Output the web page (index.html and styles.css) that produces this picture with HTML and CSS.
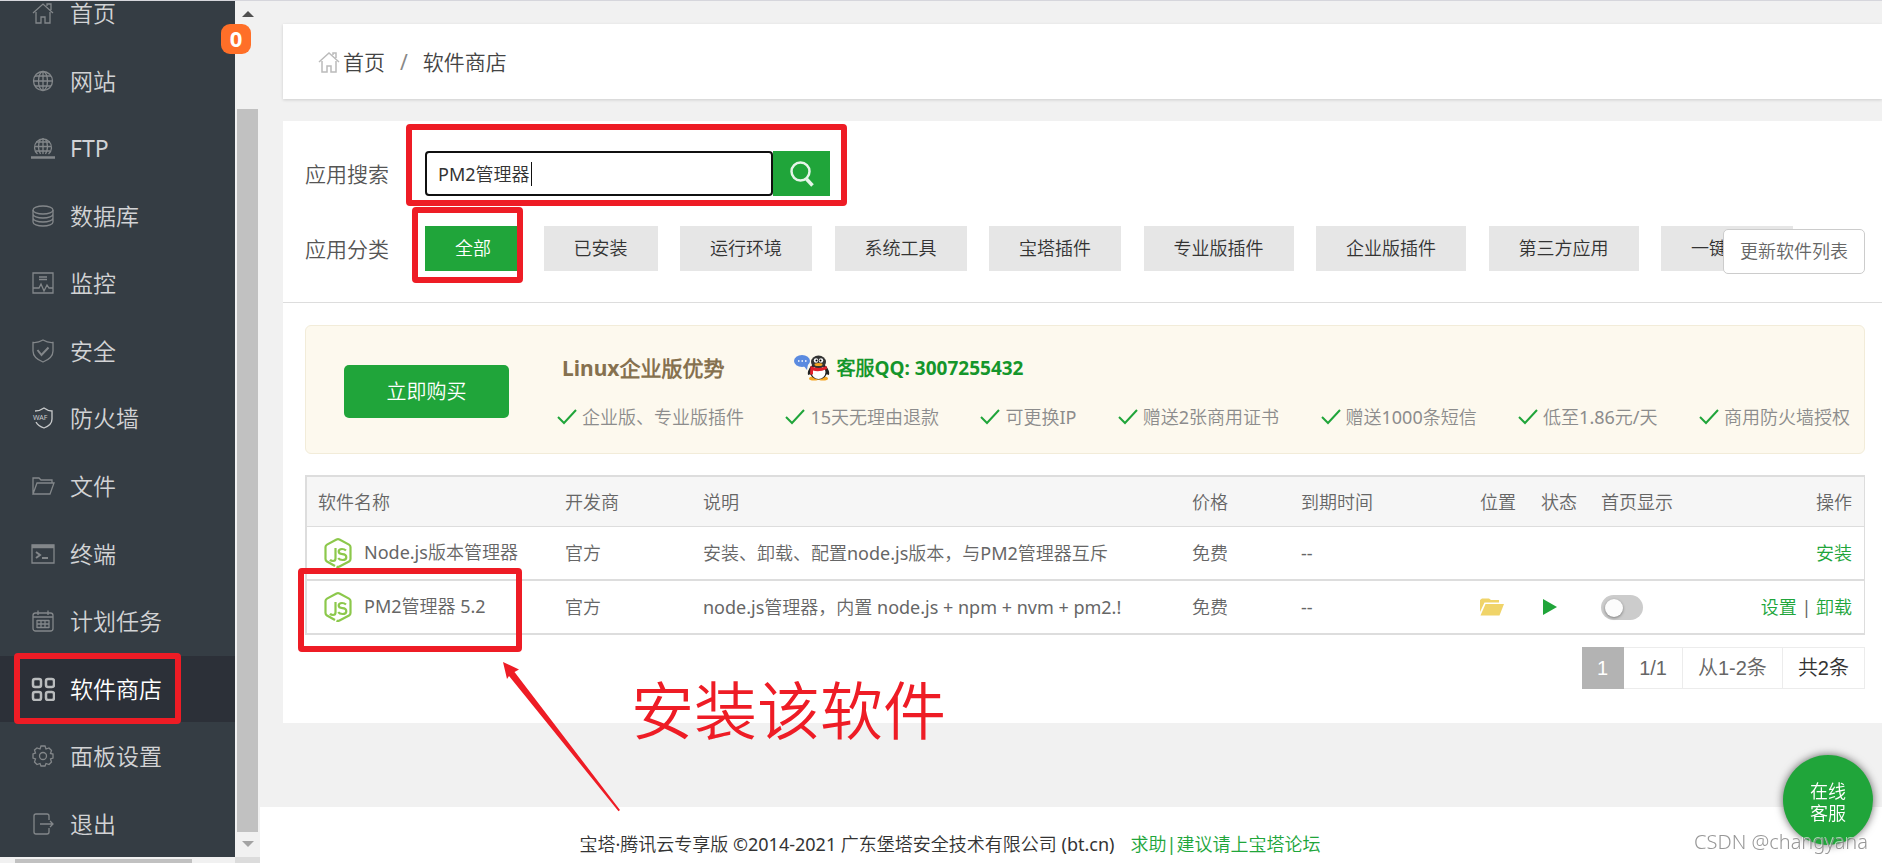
FILE: index.html
```html
<!DOCTYPE html>
<html lang="zh-CN">
<head>
<meta charset="utf-8">
<title>软件商店</title>
<link rel="stylesheet" href="styles.css">
</head>
<body>
<svg class="defs" aria-hidden="true">
  <symbol id="home" viewBox="0 0 24 24"><path d="M2 12 12 3l10 9M5 11v11h5v-6h4v6h5V11M16 5V3h3v5"/></symbol>
  <symbol id="check" viewBox="0 0 20 16"><path d="M1 8l6 6L19 1"/></symbol>
  <symbol id="nodejs" viewBox="0 0 28 30">
    <path d="M11 28 3 23.500Q1.500 22.500 1.500 21V9Q1.500 7.500 3 6.600L12.500 1.500Q14 .8 15.500 1.500L25 6.600Q26.500 7.500 26.500 9v12q0 1.500-1.500 2.500l-9.500 5q-1.500 .8-3 .2"/>
    <path d="M11.500 10v10.500q0 2.500-2.500 2.500-2 0-3-1.200M22 12.500q-1.500-1.500-4-1.500-3.300 0-3.300 2.600 0 2.400 3.600 2.600 4 .2 4 3 0 2.800-3.800 2.800-3 0-4.300-1.800"/>
  </symbol>
</svg>

<div class="app">
  <aside class="side">
    <nav class="menu">
      <a href="#" class="menu-item"><svg class="ico" viewBox="0 0 24 24"><path d="M2 12 12 3l10 9M5 11v11h5v-6h4v6h5V11M16 5V3h4v6"/></svg>首页</a>
      <a href="#" class="menu-item"><svg class="ico" viewBox="0 0 24 24"><circle cx="12" cy="12" r="9.500"/><ellipse cx="12" cy="12" rx="4.500" ry="9.500"/><path d="M12 2.500v19M2.500 12h19M4 7h16M4 17h16"/></svg>网站</a>
      <a href="#" class="menu-item"><svg class="ico" viewBox="0 0 24 24"><path d="M6.500 18a8.500 8.500 0 1 1 11 0"/><path d="M9.500 18q-4-7 0-15M14.500 18q4-7 0-15M12 2v16M4 10.500h16M5 6h14M5 15h14"/><path d="M0 21.500h24M9 21.500h6" stroke-width="2.500"/></svg>FTP</a>
      <a href="#" class="menu-item"><svg class="ico" viewBox="0 0 24 24"><ellipse cx="12" cy="6" rx="10" ry="4"/><path d="M2 6v12c0 2.200 4.500 4 10 4s10-1.800 10-4V6M2 10c0 2.200 4.500 4 10 4s10-1.800 10-4M2 14c0 2.200 4.500 4 10 4s10-1.800 10-4"/></svg>数据库</a>
      <a href="#" class="menu-item"><svg class="ico" viewBox="0 0 24 24"><path d="M2 2h20v20H2zM2 17h6l2-4 3 7 3-6 2 3h4M8 6h8M8 8.500h8"/></svg>监控</a>
      <a href="#" class="menu-item"><svg class="ico" viewBox="0 0 24 24"><path d="M12 1q5 3 10 2.500V12q0 7-10 11Q2 19 2 12V3.500Q7 4 12 1z"/><path d="M6.500 11l4 5 7-7.500" stroke-width="2"/></svg>安全</a>
      <a href="#" class="menu-item waf"><svg class="ico" viewBox="0 0 24 24"><path d="M4 5q5 0 9-3 4 3 8 3v8q0 6-8 9-6-2-8-6"/><text x="2" y="14" class="waf-text">WAF</text></svg>防火墙</a>
      <a href="#" class="menu-item"><svg class="ico" viewBox="0 0 24 24"><path d="M2 20V4h6l2 2h11v3M2 20h17l4-11H6z"/></svg>文件</a>
      <a href="#" class="menu-item"><svg class="ico" viewBox="0 0 24 24"><path d="M1 3h22v18H1z"/><path d="M1 4.500h22" stroke-width="3.500"/><path d="M5 10l4 3-4 3M11 16h6" stroke-width="2"/></svg>终端</a>
      <a href="#" class="menu-item"><svg class="ico" viewBox="0 0 24 24"><rect x="2" y="4" width="20" height="18" rx="2.500"/><path d="M2 8h20M7 1.500V6M17 1.500V6M6 11.500h12M6 15h12M6 18.500h12M6 11v8M10 11v8M14 11v8M18 11v8"/></svg>计划任务</a>
      <a href="#" class="menu-item active"><svg class="ico" viewBox="0 0 24 24"><rect x="2" y="2" width="8" height="8" rx="2"/><rect x="15" y="2" width="8" height="8" rx="2"/><rect x="2" y="15" width="8" height="8" rx="2"/><rect x="15" y="15" width="8" height="8" rx="2"/></svg>软件商店</a>
      <a href="#" class="menu-item"><svg class="ico" viewBox="0 0 24 24"><circle cx="12" cy="12" r="3.500"/><path d="M10 2h4l1 3 3-1 2.500 2.500-1 3L22 10v4l-2.500 1 1 3-2.500 2.500-3-1L14 22h-4l-1-2.500-3 1L3.500 18l1-3L2 14v-4l2.500-1-1-3L6 4l3 1z"/></svg>面板设置</a>
      <a href="#" class="menu-item"><svg class="ico" viewBox="0 0 24 24"><path d="M18 8V4q0-2-2-2H5Q3 2 3 4v16q0 2 2 2h11q2 0 2-2v-4M9 12h13M19 9l3 3-3 3"/></svg>退出</a>
    </nav>
    <span class="badge">0</span>
  </aside>
  <div class="hbar"><span class="hthumb"></span></div>
  <div class="vbar">
    <svg class="arrow" viewBox="0 0 12 6"><path d="M0 6 6 0l6 6z"/></svg>
    <span class="vthumb"></span>
    <svg class="arrow pale" viewBox="0 0 12 6"><path d="M0 0h12L6 6z"/></svg>
  </div>
  <div class="corner"></div>

  <div class="page">
    <main class="content">
      <div class="crumbs">
        <svg class="crumb-home"><use href="#home"/></svg>
        <a href="#">首页</a><span class="slash">/</span><span>软件商店</span>
      </div>

      <section class="panel">
        <div class="filters">
          <div class="row">
            <label class="row-label" for="q">应用搜索</label>
            <div class="search">
              <div class="field"><input id="q" type="text" value="PM2管理器"><span class="caret"></span></div>
              <button class="go" aria-label="搜索"><svg viewBox="0 0 24 26"><circle cx="10.500" cy="10.500" r="9"/><path d="M16.500 18l6 6.500" stroke-width="3.500"/></svg></button>
            </div>
          </div>
          <div class="row">
            <span class="row-label">应用分类</span>
            <div class="cats">
              <button class="cat on">全部</button>
              <button class="cat">已安装</button>
              <button class="cat">运行环境</button>
              <button class="cat">系统工具</button>
              <button class="cat">宝塔插件</button>
              <button class="cat">专业版插件</button>
              <button class="cat">企业版插件</button>
              <button class="cat">第三方应用</button>
              <button class="cat">一键部署</button>
            </div>
          </div>
          <button class="update">更新软件列表</button>
        </div>

        <div class="body">
          <div class="promo">
            <button class="buy">立即购买</button>
            <div class="promo-main">
              <div class="promo-head">
                <strong class="promo-title">Linux企业版优势</strong>
                <a href="#" class="qq">
                  <svg viewBox="0 0 36 26">
                    <ellipse cx="8" cy="6" rx="8" ry="6" fill="#5b8be0"/><path d="M9 10l4 5 1-6z" fill="#5b8be0"/>
                    <path d="M4 6h1.500M7.500 6H9M11 6h1.500" stroke="#fff" stroke-width="1.500"/>
                    <ellipse cx="20" cy="23.500" rx="5" ry="2" fill="#f5a623"/><ellipse cx="29" cy="23.500" rx="5" ry="2" fill="#f5a623"/>
                    <path d="M17 11q-4 5-3 9l3-1zM32 11q4 5 3 9l-3-1z" fill="#222"/>
                    <ellipse cx="24.500" cy="16" rx="9" ry="8.500" fill="#222"/><ellipse cx="24.500" cy="17" rx="7" ry="7" fill="#fff"/>
                    <ellipse cx="24.500" cy="7" rx="7.500" ry="6.500" fill="#333"/>
                    <circle cx="22" cy="5.500" r="2.200" fill="#fff"/><circle cx="27" cy="5.500" r="2.200" fill="#fff"/><circle cx="22.500" cy="5.500" r="1"/><circle cx="26.500" cy="5.500" r="1"/>
                    <ellipse cx="24.500" cy="9.500" rx="4" ry="1.500" fill="#f5a623"/>
                    <path d="M16.500 11q8 4 16 0l.5 3q-8 3.500-14 1.500v4h-3z" fill="#e0202a"/>
                  </svg>
                  <strong>客服QQ: 3007255432</strong>
                </a>
              </div>
              <ul class="perks">
                <li><svg><use href="#check"/></svg>企业版、专业版插件</li>
                <li><svg><use href="#check"/></svg>15天无理由退款</li>
                <li><svg><use href="#check"/></svg>可更换IP</li>
                <li><svg><use href="#check"/></svg>赠送2张商用证书</li>
                <li><svg><use href="#check"/></svg>赠送1000条短信</li>
                <li><svg><use href="#check"/></svg>低至1.86元/天</li>
                <li><svg><use href="#check"/></svg>商用防火墙授权</li>
              </ul>
            </div>
          </div>

          <table class="soft">
            <colgroup><col class="c-name"><col class="c-dev"><col class="c-desc"><col class="c-price"><col class="c-exp"><col class="c-pos"><col class="c-state"><col class="c-home"><col class="c-act"></colgroup>
            <thead>
              <tr><th>软件名称</th><th>开发商</th><th>说明</th><th>价格</th><th>到期时间</th><th>位置</th><th>状态</th><th>首页显示</th><th class="act">操作</th></tr>
            </thead>
            <tbody>
              <tr>
                <td><div class="name"><svg><use href="#nodejs"/></svg><span>Node.js版本管理器</span></div></td>
                <td>官方</td><td>安装、卸载、配置node.js版本，与PM2管理器互斥</td><td>免费</td><td>--</td><td></td><td></td><td></td>
                <td class="act"><a href="#">安装</a></td>
              </tr>
              <tr>
                <td><div class="name"><svg><use href="#nodejs"/></svg><span>PM2管理器 5.2</span></div></td>
                <td>官方</td><td>node.js管理器，内置 node.js + npm + nvm + pm2.!</td><td>免费</td><td>--</td>
                <td><svg class="folder" viewBox="0 0 24 18"><path d="M0 14V2l2-1.500h7L11 2h8v2.500H4.500z"/><path d="M5.500 6H24l-4.500 11.500H.5z"/></svg></td>
                <td><svg class="play" viewBox="0 0 14 16"><path d="M0 0l14 8-14 8z"/></svg></td>
                <td><input type="checkbox" class="switch" aria-label="首页显示"></td>
                <td class="act"><a href="#">设置</a> | <a href="#">卸载</a></td>
              </tr>
            </tbody>
          </table>

          <div class="pager"><span class="cur">1</span><span>1/1</span><span>从1-2条</span><span class="total">共2条</span></div>
        </div>
      </section>
    </main>
    <footer class="foot">宝塔·腾讯云专享版 ©2014-2021 广东堡塔安全技术有限公司 (bt.cn)<a href="#">求助|建议请上宝塔论坛</a></footer>
  </div>
</div>

<button class="service">在线<br>客服</button>
<span class="mark">CSDN @changyana</span>

<svg class="notes" aria-hidden="true">
  <g class="boxes">
    <rect x="17" y="656" width="161" height="65" rx="1"/>
    <rect x="409" y="127" width="435" height="76" rx="1"/>
    <rect x="415" y="210" width="105" height="70" rx="1"/>
    <rect x="301" y="571" width="218" height="78" rx="1"/>
  </g>
  <path class="pointer" d="M503 662l16 7.500-4.500 2.500L620 810l-1.500 1.200L509 676l-2 3z"/>
</svg>
<span class="note-text">安装该软件</span>
</body>
</html>
```
FILE: styles.css
```css
* { box-sizing: border-box; }
body {
  margin: 0;
  font-family: "Noto Sans", "Noto Sans CJK SC DemiLight", "Noto Sans CJK SC", sans-serif;
  font-size: 18px;
  line-height: 24px;
  color: #333;
  background: #f1f1f1;
  overflow: hidden;
}
button, input { font: inherit; color: inherit; }
button { border: 0; padding: 0; cursor: pointer; }
a { color: inherit; text-decoration: none; }
.defs { display: none; }

.app {
  display: grid;
  grid-template-columns: 235px 25px minmax(0, 1fr);
  grid-template-rows: minmax(0, 1fr) 6px;
  height: 100vh;
  border-top: 1px solid #d6d6dc;
}

/* sidebar */
.side { position: relative; background: #353d44; }
.menu {
  display: flex;
  flex-direction: column;
  justify-content: space-between;
  height: 100%;
  overflow: hidden;
}
.menu-item {
  display: flex;
  flex: 0 0 66px;
  align-items: center;
  gap: 15px;
  padding-left: 31px;
  font-size: 23px;
  color: #d2d3d5;
}
.menu-item:first-child { margin-top: -21px; }
.menu-item.active { background: #2c3038; color: #fff; }
.ico { width: 24px; height: 24px; fill: none; stroke: #83878a; stroke-width: 1.3; }
.active .ico { stroke: #b9bbbd; stroke-width: 2.5; }
.waf .ico { stroke: #c8cacb; }
.waf-text { font-size: 7px; fill: #c8cacb; stroke: #353d44; stroke-width: 3; paint-order: stroke; }
.badge {
  position: absolute;
  top: 23px;
  right: -16px;
  width: 30px;
  height: 30px;
  border-radius: 9px;
  background: #ff6f28;
  color: #fff;
  font-size: 22px;
  font-weight: 700;
  line-height: 28px;
  text-align: center;
  z-index: 2;
}

/* scroll bars */
.vbar {
  grid-area: 1 / 2;
  display: flex;
  flex-direction: column;
  align-items: center;
  gap: 9px;
  padding: 10px 0;
  background: #f1f1f1;
}
.vthumb { flex: 1; width: 21px; margin-top: 83px; background: #c1c1c1; }
.arrow { width: 12px; height: 6px; fill: #505050; }
.arrow.pale { fill: #a3a3a3; }
.hbar { grid-area: 2 / 1; padding: 2px 43px 0 15px; background: #f1f1f1; }
.hthumb { display: block; height: 4px; background: #c1c1c1; }
.corner { grid-area: 2 / 2; background: #dcdcdc; }

/* page */
.page { grid-area: 1 / 3 / 3 / 4; display: flex; flex-direction: column; }
.content { flex: 1; padding: 23px 0 0 23px; }
.crumbs {
  display: flex;
  align-items: center;
  height: 75px;
  padding-left: 34px;
  background: #fff;
  box-shadow: 0 1px 3px rgba(0, 0, 0, .15);
  font-size: 21px;
  color: #444;
}
.crumb-home { width: 24px; height: 24px; margin-right: 2px; fill: none; stroke: #bbb; stroke-width: 1.5; }
.slash { margin: 0 15px; color: #888; }
.panel { margin-top: 22px; padding-bottom: 34px; background: #fff; }
.filters {
  position: relative;
  display: flex;
  flex-direction: column;
  gap: 30px;
  padding: 30px 89px 31px 22px;
  border-bottom: 1px solid #ddd;
}
.row { display: flex; align-items: center; height: 45px; }
.row-label { flex: 0 0 120px; font-size: 21px; color: #555; }
.search { display: flex; height: 45px; }
.field { position: relative; }
.field input {
  width: 348px;
  height: 45px;
  padding: 0 11px 2px;
  border: 2px solid #101010;
  border-radius: 4px;
  outline: 0;
  background: #fff;
}
.caret { position: absolute; top: 11px; left: 106px; width: 1px; height: 24px; background: #111; }
.go { display: grid; place-items: center; width: 57px; background: #20a53a; }
.go svg { width: 24px; height: 26px; fill: none; stroke: #e6f5e9; stroke-width: 2.5; }
.cats { flex: 1; display: flex; justify-content: space-between; }
.cat { height: 45px; padding: 0 30px 2px; background: #e6e6e6; white-space: nowrap; }
.cat.on { background: #20a53a; color: #fff; }
.update {
  position: absolute;
  right: 17px;
  bottom: 28px;
  height: 45px;
  padding: 0 16px 1px;
  border: 1px solid #ccc;
  border-radius: 5px;
  background: #fff;
  color: #666;
}
.body { padding: 22px 17px 0 22px; }

/* promotion */
.promo {
  display: flex;
  align-items: center;
  gap: 48px;
  height: 129px;
  padding: 4px 14px 0 38px;
  border: 1px solid #f2ecd9;
  border-radius: 6px;
  background: #fdf9ee;
}
.buy { flex: 0 0 165px; height: 53px; border-radius: 5px; background: #20a53a; color: #fff; font-size: 20px; }
.promo-main { flex: 1; display: flex; flex-direction: column; gap: 24px; }
.promo-head { display: flex; align-items: center; gap: 70px; padding-left: 5px; }
.promo-title { font-size: 21px; color: #86714f; }
.qq { display: flex; align-items: center; gap: 6px; color: #15962b; font-size: 19px; }
.qq svg { width: 36px; height: 26px; }
.perks { display: flex; justify-content: space-between; margin: 0; padding: 0; list-style: none; color: #8c8c8c; white-space: nowrap; }
.perks li { display: flex; align-items: center; gap: 5px; }
.perks svg { width: 20px; height: 16px; fill: none; stroke: #20a53a; stroke-width: 2; }

/* table */
.soft {
  width: 100%;
  margin-top: 21px;
  border-spacing: 0;
  table-layout: fixed;
  border: 2px solid #ddd;
  border-right-width: 1px;
  border-bottom: 0;
  color: #666;
}
.soft th, .soft td { padding: 0 12px 0 11px; text-align: left; font-weight: 400; white-space: nowrap; }
.soft th { height: 50px; background: #f6f6f6; border-bottom: 1px solid #ddd; }
.soft td { height: 54px; border-bottom: 2px solid #ddd; }
.c-name { width: 247px; } .c-dev { width: 138px; } .c-price { width: 109px; } .c-exp { width: 179px; }
.c-pos { width: 61px; } .c-state { width: 60px; } .c-home { width: 100px; } .c-act { width: 174px; }
.soft .act { text-align: right; }
.act a { color: #20a53a; }
.name { display: flex; align-items: center; gap: 12px; padding-left: 6px; }
.name span { padding-bottom: 3px; }
.name svg { width: 28px; height: 30px; fill: none; stroke: #8cc84b; stroke-width: 2.2; }
.folder { display: block; width: 24px; height: 18px; fill: #f0d469; }
.play { display: block; width: 14px; height: 16px; margin-left: 2px; fill: #20a53a; }
.switch {
  appearance: none;
  display: block;
  width: 42px;
  height: 25px;
  margin: 0;
  padding: 4px;
  border-radius: 13px;
  background: #ccc;
}
.switch::before {
  content: "";
  display: block;
  width: 18px;
  height: 18px;
  border-radius: 50%;
  background: #fcfcfc;
  box-shadow: 0 1px 3px rgba(0, 0, 0, .4);
}

.pager {
  display: flex;
  justify-content: flex-end;
  margin-top: 12px;
  font-family: "Liberation Sans", "Noto Sans CJK SC DemiLight", "Noto Sans CJK SC", sans-serif;
  font-size: 20px;
  line-height: 40px;
  color: #666;
}
.pager span { padding: 0 15px; border: 1px solid #ececec; border-left: 0; }
.pager .cur { background: #b3b3b3; border-color: #b3b3b3; color: #fff; }
.pager .total { color: #333; }

.foot {
  display: flex;
  justify-content: center;
  align-items: center;
  gap: 16px;
  height: 56px;
  padding: 18px 242px 0 0;
  background: #fff;
}
.foot a { color: #20a53a; }

/* floating layers */
.service {
  position: fixed;
  right: 9px;
  bottom: 18px;
  width: 90px;
  height: 90px;
  padding-top: 4px;
  border-radius: 50%;
  background: #20a53a;
  box-shadow: 0 0 9px rgba(0, 0, 0, .6);
  color: #fff;
  line-height: 22px;
}
.mark {
  position: fixed;
  right: 14px;
  bottom: 9px;
  font-size: 20px;
  font-weight: 300;
  color: rgba(140, 140, 140, .9);
  text-shadow: -1px -1px 0 rgba(255, 255, 255, .6);
}
.notes { position: fixed; inset: 0; width: 100%; height: 100%; pointer-events: none; z-index: 3; }
.boxes { fill: none; stroke: #ee1c25; stroke-width: 6; }
.pointer { fill: #ee1c25; }
.note-text {
  position: fixed;
  left: 631px;
  top: 674px;
  font-size: 63px;
  line-height: 72px;
  color: #ee1c25;
  z-index: 3;
}
```
